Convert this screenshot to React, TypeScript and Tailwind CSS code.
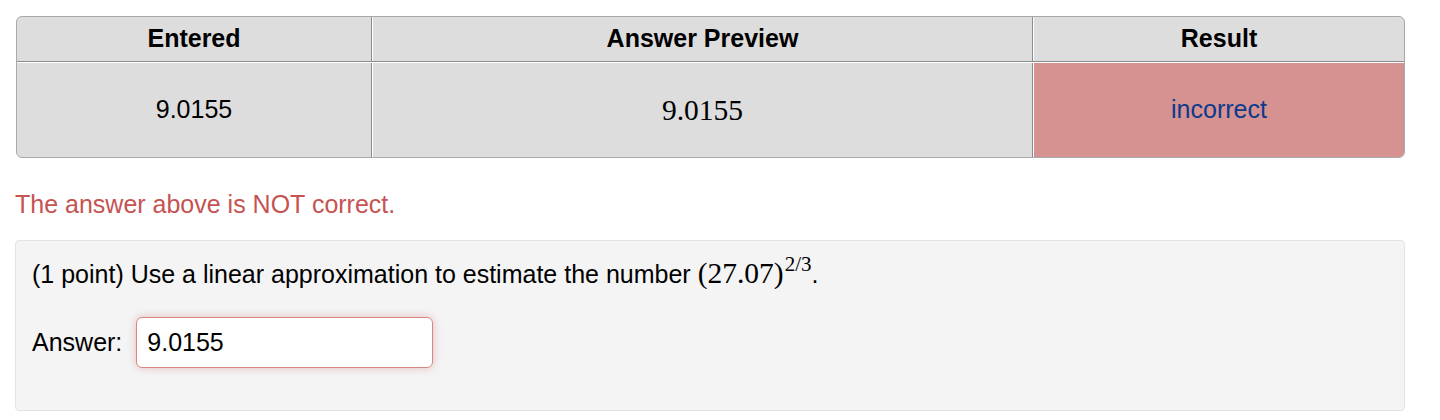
import React from "react";

const Cell: React.FC<{ className?: string; children: React.ReactNode }> = ({ className = "", children }) => (
  <div className={`flex items-center justify-center ${className}`}>{children}</div>
);

export default function App() {
  return (
    <div className="min-h-[420px] bg-white pt-[16px] font-['Liberation_Sans',Arial,sans-serif] text-[25px] text-black">
      {/* attempt results table */}
      <div className="ml-[16px] w-[1389px] overflow-hidden rounded-[6px] border border-[#a9a9a9] bg-[#dddddd]">
        <div className="flex h-[45px] border-b border-[#8c8c8c] font-bold">
          <Cell className="w-[355px] border-r border-r-[#8c8c8c]">Entered</Cell>
          <Cell className="w-[661px] border-x border-l-white border-r-[#8c8c8c]">Answer Preview</Cell>
          <Cell className="flex-1 border-l border-l-white">Result</Cell>
        </div>
        <div className="flex h-[95px] border-t border-white">
          <Cell className="w-[355px] border-r border-r-[#8c8c8c]">9.0155</Cell>
          <Cell className="w-[661px] border-x border-l-white border-r-[#8c8c8c] font-['Liberation_Serif','Times_New_Roman',serif] text-[29.5px]">
            9.0155
          </Cell>
          <Cell className="flex-1 border-l border-l-white bg-[#d69191] text-[#0c3a8c]">incorrect</Cell>
        </div>
      </div>

      <p className="ml-[15px] mt-[29px] leading-[34px] text-[#c65352]">The answer above is NOT correct.</p>

      {/* problem body */}
      <div className="ml-[15px] mt-[19px] h-[171px] w-[1390px] rounded-[4px] border border-[#e3e3e3] bg-[#f4f4f4] px-[16px] pt-[16px]">
        <p className="leading-[35px]">
          (1 point) Use a linear approximation to estimate the number{" "}
          <span className="font-['Liberation_Serif','Times_New_Roman',serif] text-[29.5px] leading-none">
            (27.07)
            <span className="relative -top-[12px] ml-[1px] inline-block text-[21px] leading-none">2/3</span>
          </span>
          .
        </p>
        <div className="mt-[25px] flex items-center gap-[14px]">
          <label htmlFor="ans">Answer:</label>
          <input
            id="ans"
            readOnly
            defaultValue="9.0155"
            className="h-[51px] w-[297px] rounded-[6px] border border-[#d98784] bg-white px-[10px] font-['Liberation_Sans',Arial,sans-serif] text-[25px] text-black shadow-[0_0_8px_rgba(205,90,90,0.35)] outline-none"
          />
        </div>
      </div>
    </div>
  );
}
